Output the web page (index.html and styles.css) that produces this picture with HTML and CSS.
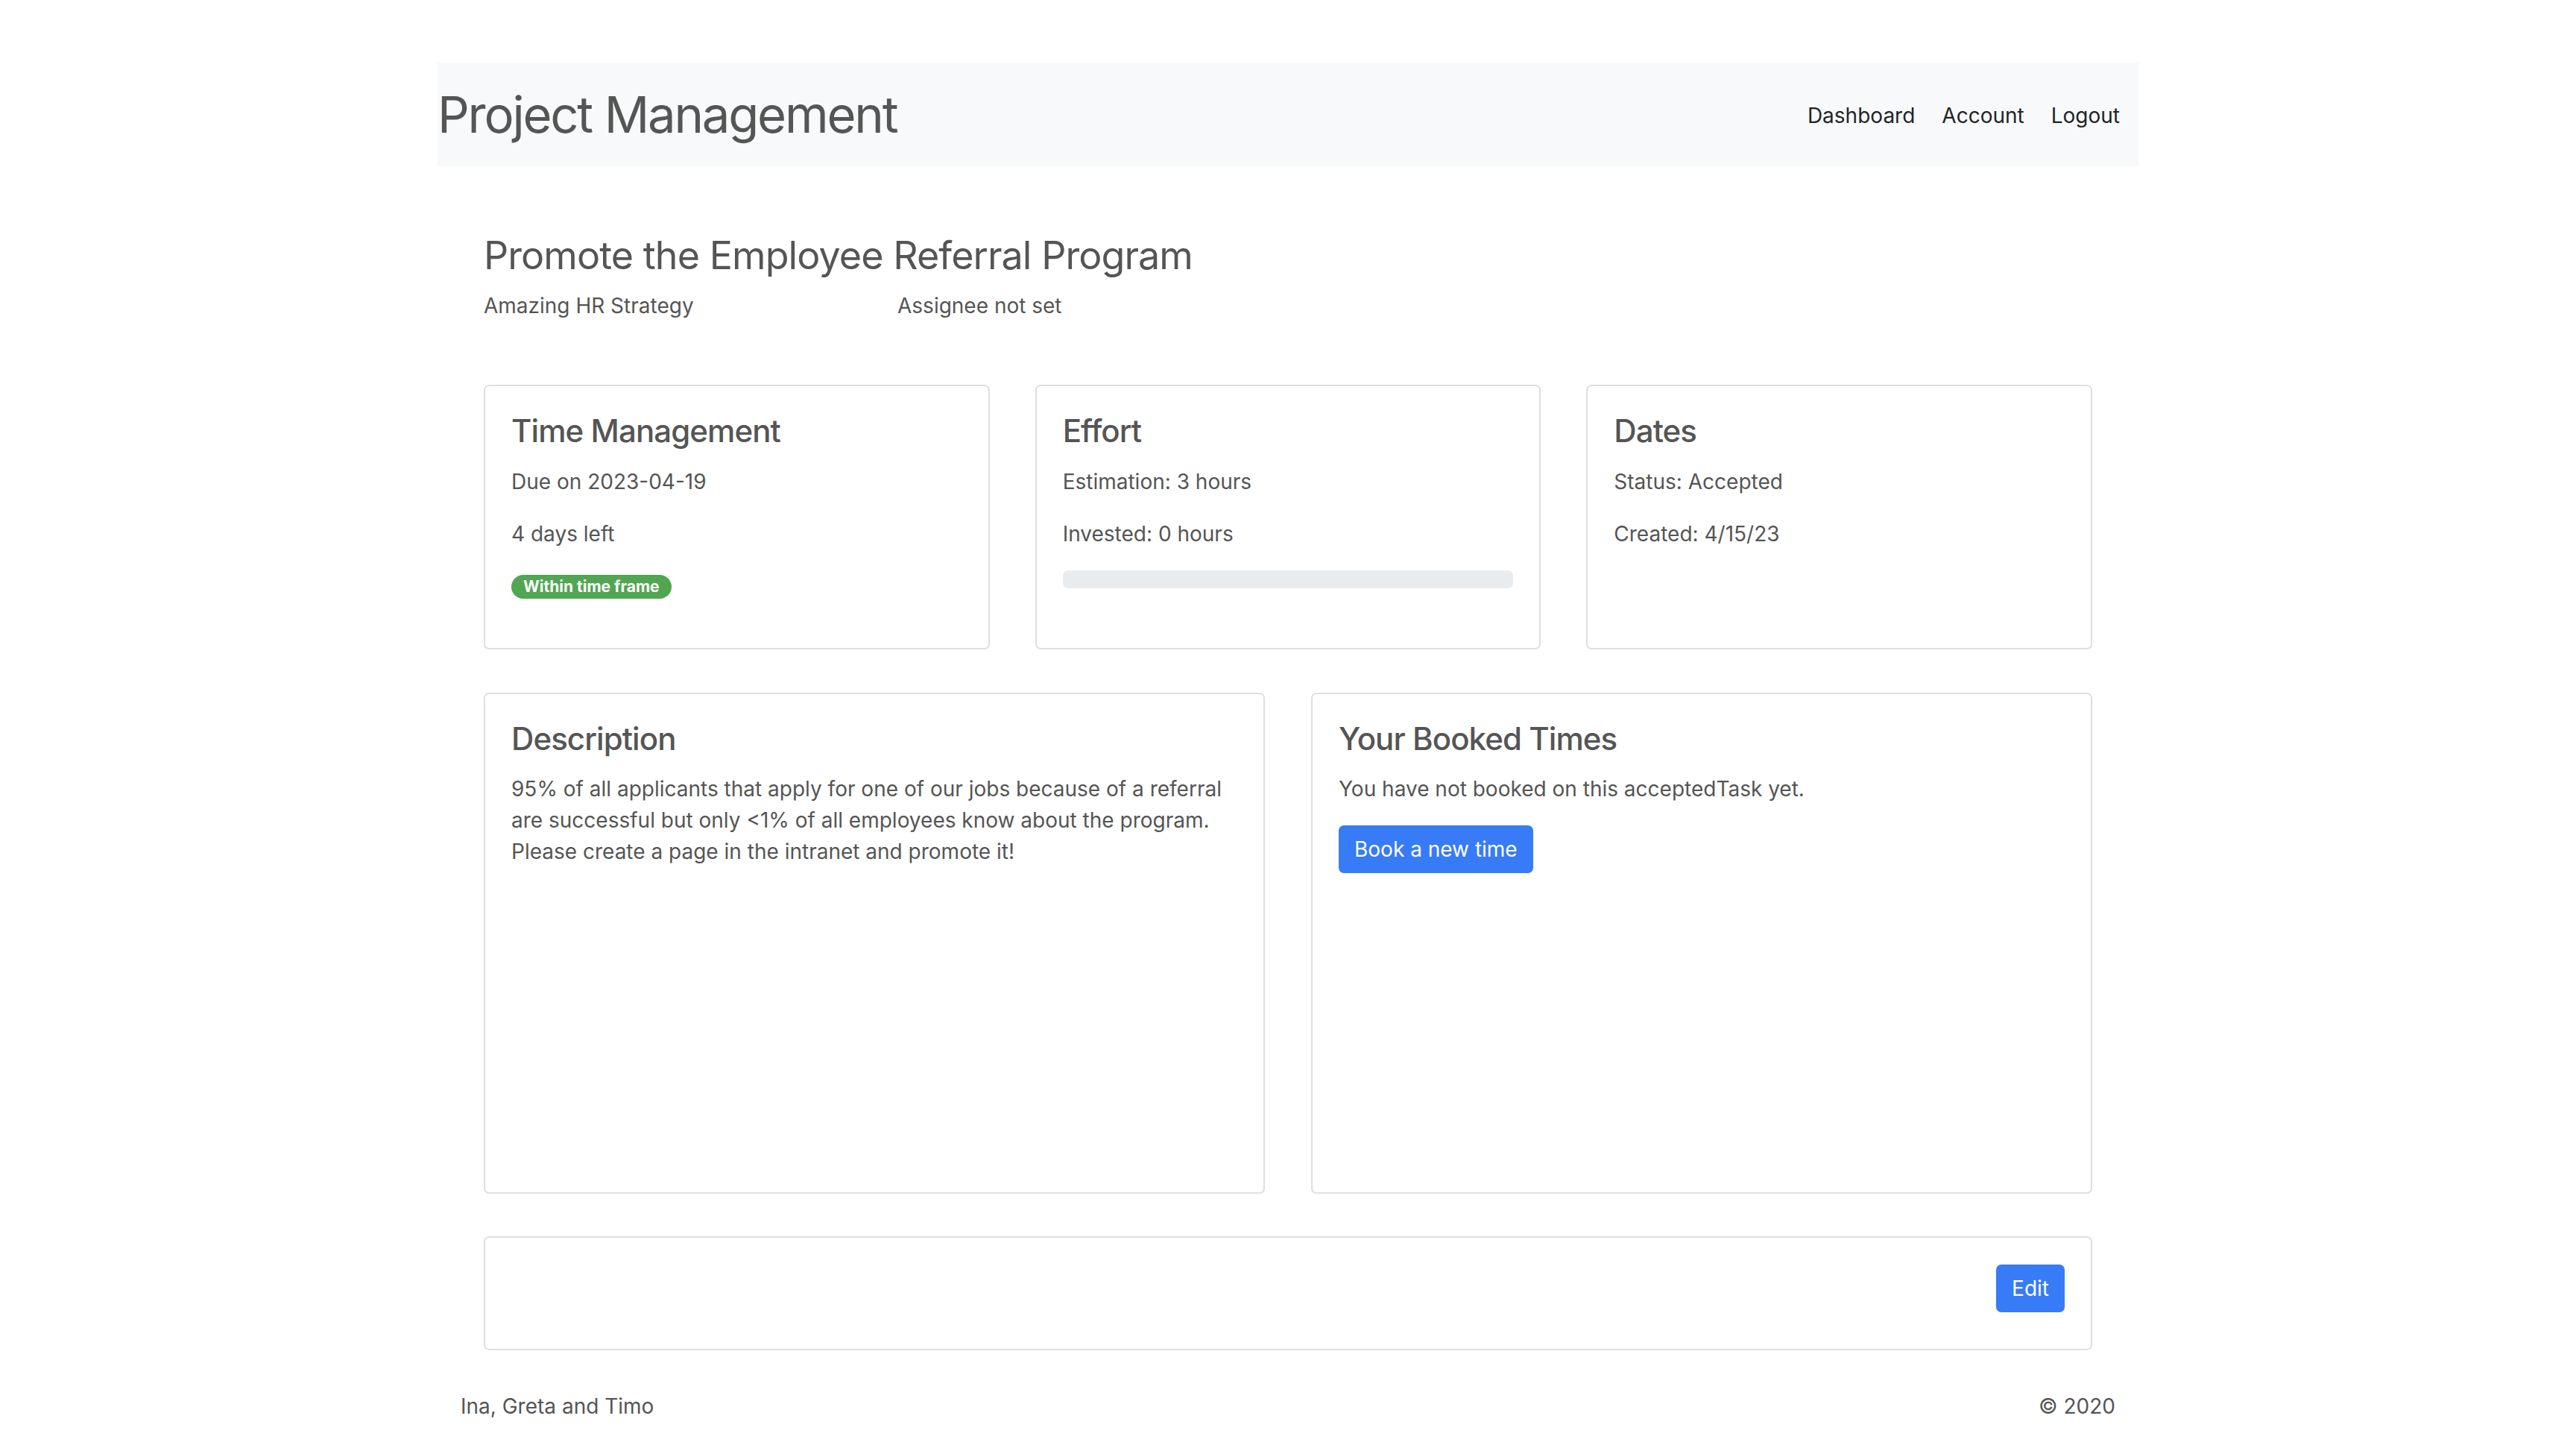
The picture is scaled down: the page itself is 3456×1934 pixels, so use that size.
FILE: index.html
```html
<!DOCTYPE html>
<html lang="en">
<head>
<meta charset="utf-8">
<title>Project Management</title>
<link rel="stylesheet" href="styles.css">
</head>
<body>
<div class="container">
  <nav class="navbar">
    <h1 class="brand">Project Management</h1>
    <ul class="nav-links">
      <li><a href="#">Dashboard</a></li>
      <li><a href="#">Account</a></li>
      <li><a href="#">Logout</a></li>
    </ul>
  </nav>

  <main class="content">
    <header class="task-header">
      <h2 class="task-title">Promote the Employee Referral Program</h2>
      <div class="task-meta">
        <span>Amazing HR Strategy</span>
        <span>Assignee not set</span>
      </div>
    </header>

    <section class="grid three">
      <div class="card">
        <h4 class="card-title">Time Management</h4>
        <p>Due on 2023-04-19</p>
        <p>4 days left</p>
        <p><span class="badge">Within time frame</span></p>
      </div>
      <div class="card">
        <h4 class="card-title">Effort</h4>
        <p>Estimation: 3 hours</p>
        <p>Invested: 0 hours</p>
        <div class="progress"><div class="progress-bar" style="width:0%"></div></div>
      </div>
      <div class="card">
        <h4 class="card-title">Dates</h4>
        <p>Status: Accepted</p>
        <p>Created: 4/15/23</p>
      </div>
    </section>

    <section class="grid two">
      <div class="card tall">
        <h4 class="card-title">Description</h4>
        <p class="desc">95% of all applicants that apply for one of our jobs because of a referral are successful but only &lt;1% of all employees know about the program. Please create a page in the intranet and promote it!</p>
      </div>
      <div class="card tall">
        <h4 class="card-title">Your Booked Times</h4>
        <p>You have not booked on this acceptedTask yet.</p>
        <button class="btn">Book a new time</button>
      </div>
    </section>

    <section class="card actions">
      <button class="btn btn-edit">Edit</button>
    </section>
  </main>

  <footer class="footer">
    <span>Ina, Greta and Timo</span>
    <span>© 2020</span>
  </footer>
</div>
</body>
</html>
```
FILE: styles.css
```css
* { box-sizing: border-box; }

body {
  margin: 0;
  font-family: Inter, "Noto Sans", sans-serif;
  font-size: 28px;
  line-height: 1.5;
  color: #555;
  background: #fff;
}

.container {
  width: 2282px;
  margin: 84px auto 0;
}

.navbar {
  display: flex;
  align-items: center;
  justify-content: space-between;
  background: #f8f9fa;
  height: 139px;
  padding: 2px 25px 0 0;
}

.brand {
  margin: 0;
  font-size: 67px;
  line-height: 1.2;
  font-weight: 400;
  color: #555;
  letter-spacing: -0.033em;
}

.nav-links {
  display: flex;
  gap: 36px;
  list-style: none;
  margin: 0;
  padding: 0;
}

.nav-links a {
  color: #212529;
  text-decoration: none;
}

.content {
  padding: 0 62px;
}

.task-header {
  padding-top: 89px;
}

.task-title {
  margin: 0 0 15px;
  font-size: 52px;
  line-height: 1.2;
  font-weight: 400;
  color: #555;
  letter-spacing: -0.018em;
}

.task-meta {
  display: grid;
  grid-template-columns: 555px auto;
  margin-bottom: 85px;
}

.grid {
  display: grid;
}

.grid.three {
  grid-template-columns: repeat(3, 1fr);
  gap: 61px;
  margin-bottom: 58px;
}

.grid.two {
  grid-template-columns: repeat(2, 1fr);
  gap: 62px;
  margin-bottom: 57px;
}

.card {
  border: 2px solid #dfdfdf;
  border-radius: 7px;
  padding: 35px;
  background: #fff;
}

.grid.three .card {
  padding-bottom: 34px;
}

.card.tall {
  min-height: 672px;
}

.card-title {
  margin: 0 0 21px;
  font-size: 42px;
  line-height: 1.2;
  font-weight: 500;
  color: #555;
  letter-spacing: -0.022em;
}

.card p {
  margin: 0 0 28px;
}

.badge {
  display: inline-block;
  background: #51a651;
  color: #fff;
  font-size: 21px;
  font-weight: 700;
  line-height: 1;
  padding: 5px 16px 6px;
  border-radius: 20px;
  vertical-align: 2px;
}

.progress {
  height: 24px;
  background: #e9ecef;
  border-radius: 7px;
  overflow: hidden;
}

.progress-bar {
  height: 100%;
  background: #377bf6;
}

.btn {
  font-family: inherit;
  font-size: 28px;
  line-height: 1.5;
  color: #fff;
  background: #377bf6;
  border: 2px solid #377bf6;
  border-radius: 7px;
  padding: 9px 19px;
  cursor: pointer;
}

.actions {
  display: flex;
  justify-content: flex-end;
  padding: 36px 35px 35px;
}

.btn-edit {
  margin-bottom: 14px;
}

.footer {
  display: flex;
  justify-content: space-between;
  padding: 54px 31px 20px;
}
```
